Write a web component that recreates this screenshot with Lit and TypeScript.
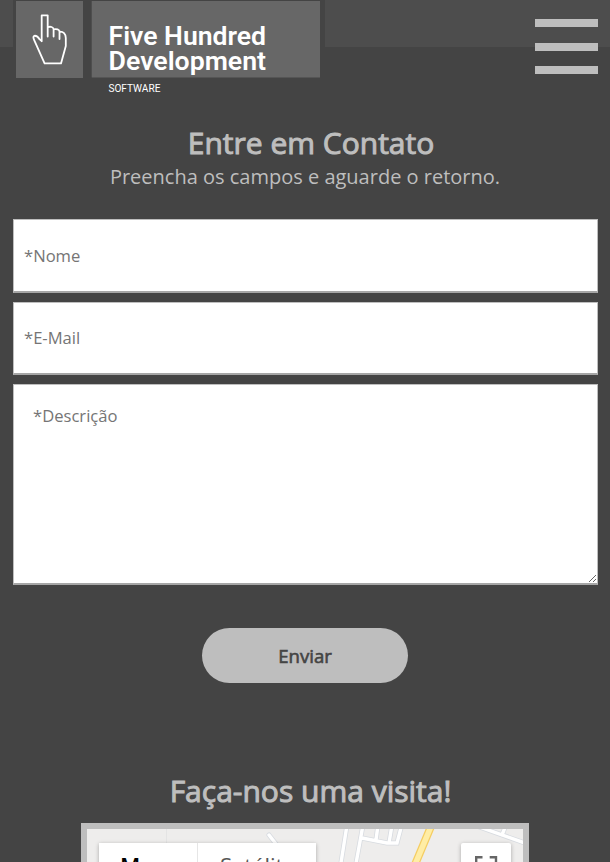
import { LitElement, html, css } from "lit";
import { customElement } from "lit/decorators.js";

@customElement("site-header")
class SiteHeader extends LitElement {
  static styles = css`
    :host { display: block; height: 47px; background: #4d4d4d; }
    .row { display: flex; justify-content: space-between; padding: 0 12px 0 13px; }
    .logo { display: block; }
    .menu { display: flex; flex-direction: column; gap: 15.7px; padding-top: 19px; }
    .bar { width: 63px; height: 8px; background: #bebebe; }
  `;
  render() {
    return html`<div class="row">
      <svg class="logo" width="312" height="98" viewBox="13 0 312 98">
        <rect x="13" width="312" height="98" fill="#444" />
        <rect x="16" y="1" width="67" height="77" fill="#676767" />
        <rect x="91.7" y="1" width="228.3" height="76.5" fill="#676767" />
        <path fill="none" stroke="#fff" stroke-width="1.8" stroke-linejoin="round" stroke-linecap="round"
          d="M41.7 41.2V15.3h6v21.2M47.7 27.2c2.8-1 5.7-.2 5.9 2v7.3M53.6 29.4c3-.8 5.7.2 5.9 2.3V39M59.5 31.7c3.8-.4 6.2 2.3 6.3 6.3v8L61 63.4H44.6L34.2 40.1c-1-2.3-1.2-4 .2-4.3 2.5-.4 4 1.6 5.3 3.6l2 1.8" />
        <g fill="#fff" font-family="Roboto, sans-serif">
          <text x="108.600" y="45.200" font-size="25.800" font-weight="600" textLength="157.400" lengthAdjust="spacingAndGlyphs">Five Hundred</text>
          <text x="108.600" y="70.200" font-size="25.800" font-weight="600" textLength="157.400" lengthAdjust="spacingAndGlyphs">Development</text>
          <text x="108.400" y="91.500" font-size="10.500" textLength="52" lengthAdjust="spacingAndGlyphs">SOFTWARE</text>
        </g>
      </svg>
      <div class="menu"><div class="bar"></div><div class="bar"></div><div class="bar"></div></div>
    </div>`;
  }
}

@customElement("contact-form")
class ContactForm extends LitElement {
  static styles = css`
    :host { display: block; }
    form { display: flex; flex-direction: column; align-items: center; gap: 9px; padding: 0 12px 0 13px; }
    input, textarea {
      box-sizing: border-box; width: 100%; margin: 0; border: 1px solid #bebebe; border-bottom: 2px solid #a6a6a6;
      border-radius: 0; background: #fff; outline: none; font: 16.6px "Open Sans", sans-serif; color: #444;
    }
    input { height: 74px; padding: 0 10px; }
    .mail { height: 73px; padding-bottom: 2px; }
    textarea { height: 201px; padding: 19px; resize: vertical; display: block; }
    ::placeholder { color: #757575; opacity: 1; }
    button {
      width: 206px; height: 55px; margin: 34px 1px 0 0; padding: 0; border: 0; border-radius: 28px;
      background: #bebebe; color: #444; font: 400 18.6px "Open Sans", sans-serif;
      -webkit-text-stroke: 0.6px #444;
    }
  `;
  render() {
    return html`<form>
      <input placeholder="*Nome" />
      <input class="mail" placeholder="*E-Mail" />
      <textarea placeholder="*Descrição"></textarea>
      <button type="button">Enviar</button>
    </form>`;
  }
}

@customElement("visit-map")
class VisitMap extends LitElement {
  static styles = css`
    :host {
      display: block; position: relative; box-sizing: border-box; width: 448px; height: 300px;
      border: 6px solid #bebebe; background: #eeedec; overflow: hidden;
    }
    .roads { display: block; }
    .types { position: absolute; left: 12px; top: 14px; display: flex; height: 48px; background: #fff; box-shadow: 0 1px 4px rgba(0,0,0,.3); }
    .type { box-sizing: border-box; height: 48px; font: 22px/45px "Open Sans", sans-serif; color: #565656; padding-left: 22px; width: 118px; overflow: hidden; }
    .active { width: 99px; padding-left: 21px; color: #000; font-weight: 600; border-right: 1px solid #e6e6e6; }
    .full { position: absolute; right: 12px; top: 14px; width: 50px; height: 50px; background: #fff; border-radius: 2px; box-shadow: 0 1px 4px rgba(0,0,0,.3); }
  `;
  render() {
    return html`
      <svg class="roads" width="436" height="288" viewBox="87 829 436 288" fill="none">
        <path d="M166.500 829v30" stroke="#e4e4e4" />
        <path d="M269 835l14 18M347 825l-7 44M363 825l-8 44M362 838l25 5h10l5-19M378 825l-2 15M392 825l-3 18M474 825l65 23M506 825l-4 10" stroke="#d7dbe0" stroke-width="5" stroke-linecap="round" />
        <path d="M269 835l14 18M347 825l-7 44M363 825l-8 44M362 838l25 5h10l5-19M378 825l-2 15M392 825l-3 18M474 825l65 23M506 825l-4 10" stroke="#fff" stroke-width="3.400" stroke-linecap="round" />
        <path d="M432 824l-18 43" stroke="#f5cd61" stroke-width="8" />
        <path d="M432 824l-18 43" stroke="#ffeda5" stroke-width="5.500" />
      </svg>
      <div class="types"><div class="type active">Mapa</div><div class="type">Satélite</div></div>
      <svg class="full" viewBox="0 0 50 50" fill="none" stroke="#666" stroke-width="2.400"><path d="M15.200 21.500v-7.300H21.500M28.700 14.200h6.300v7.300M15.200 28v7H21.500M28.700 35h6.300v-7" /></svg>`;
  }
}

@customElement("app-root")
class AppRoot extends LitElement {
  static styles = css`
    :host { display: block; height: 862px; overflow: hidden; background: #444; color: #bebebe; font-family: "Open Sans", sans-serif; }
    h1, p { margin: 0; text-align: center; font-weight: 400; }
    h1 { font-size: 30px; line-height: 40px; -webkit-text-stroke: 1px #bebebe; }
    .contact { padding: 76px 0 0 12px; }
    p { font-size: 20px; line-height: 28px; }
    contact-form { margin-top: 28px; }
    .visit { padding: 88px 0 0 11px; }
    visit-map { margin: 12px auto 0; }
  `;
  render() {
    return html`<site-header></site-header>
      <h1 class="contact">Entre em Contato</h1>
      <p>Preencha os campos e aguarde o retorno.</p>
      <contact-form></contact-form>
      <h1 class="visit">Faça-nos uma visita!</h1>
      <visit-map></visit-map>`;
  }
}
